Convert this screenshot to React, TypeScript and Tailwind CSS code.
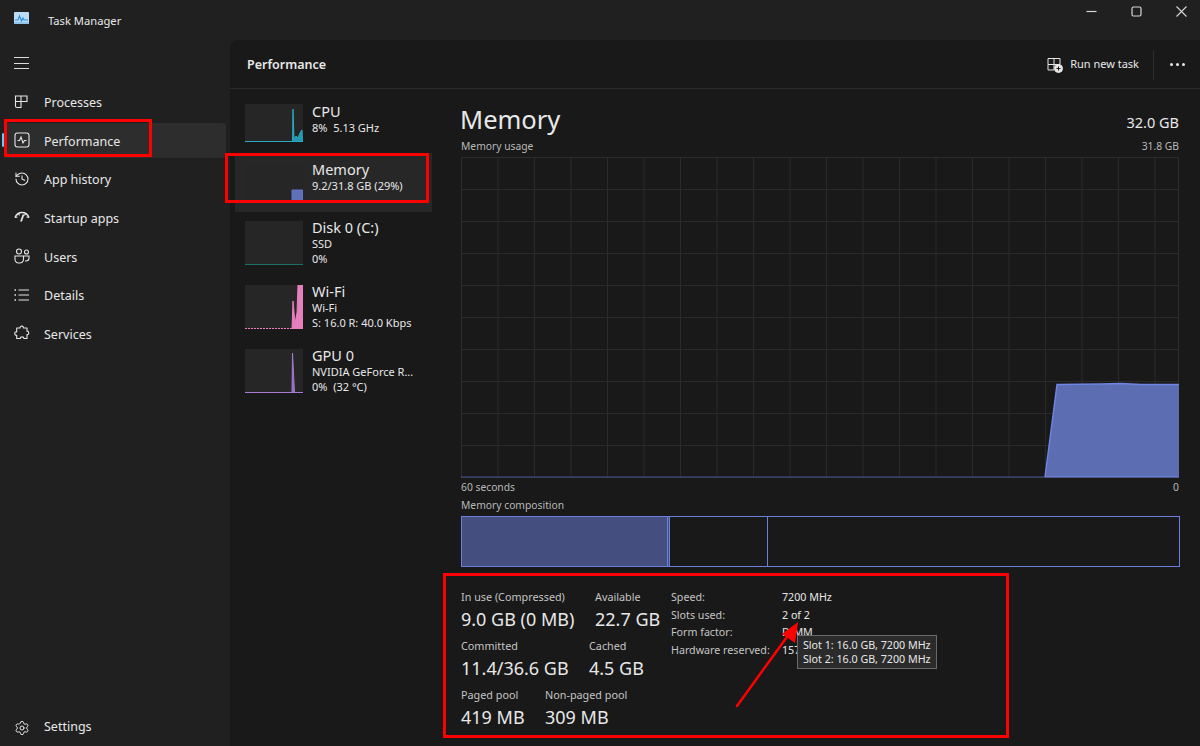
import { History, Settings } from "lucide-react";
import type { ReactNode } from "react";

const font = { fontFamily: '"Noto Sans", "Open Sans", sans-serif' };

function Icon({ children }: { children: ReactNode }) {
  return (
    <svg width="16" height="16" viewBox="0 0 16 16" fill="none" stroke="#e6e6e6" strokeWidth="1.1" className="shrink-0">
      {children}
    </svg>
  );
}

const navItems = [
  {
    label: "Processes",
    icon: (
      <Icon>
        <path d="M1.500 2h5.500v5.500h-5.500zM7 2h6v5.500h-6zM1.500 7.500h5.500v6h-4a1.500 1.500 0 0 1-1.500-1.500z" />
      </Icon>
    ),
  },
  {
    label: "Performance",
    active: true,
    icon: (
      <Icon>
        <rect x="1" y="1" width="14" height="14" rx="2.500" />
        <path d="M3.500 8.500h2l1.500-3.500 2 6 1.500-2.500h2" />
      </Icon>
    ),
  },
  { label: "App history", icon: <History size={16} color="#e6e6e6" strokeWidth={1.600} className="shrink-0" /> },
  {
    label: "Startup apps",
    icon: (
      <Icon>
        <path d="M1 8.500c1.500-3.500 4-5 7-5s5.500 1.500 7 5" strokeWidth="1.500" />
        <path d="M1 8.500l2.500-.5M15 8.500l-2.500-.5M4.500 4.500l1 2M11.500 4.500l-1 2" />
        <path d="M9.500 5.500 7 12.500" strokeWidth="1.800" />
      </Icon>
    ),
  },
  {
    label: "Users",
    icon: (
      <Icon>
        <circle cx="5" cy="3.500" r="2.500" />
        <circle cx="12.500" cy="4" r="2" />
        <path d="M1 8h8.500v3.500a4 4 0 0 1-4 3.500h-1a3.500 3.500 0 0 1-3.500-3.500zM9.500 8h5.500v2a3 3 0 0 1-3 3h-1" />
      </Icon>
    ),
  },
  {
    label: "Details",
    icon: (
      <Icon>
        <path d="M4.500 3h10.500M4.500 8h10.500M4.500 13h10.500" />
        <path d="M.500 3h1.500M.500 8h1.500M.500 13h1.500" strokeWidth="1.500" />
      </Icon>
    ),
  },
  {
    label: "Services",
    icon: (
      <Icon>
        <path d="M6 3c0-2.500 3.500-2.500 3.500 0h3.500v3.200c2.300-.6 2.300 4 0 3.400v3.900h-3.200c.6-2.200-4-2.200-3.400 0h-3.700v-3.200c-2.600.6-2.600-4.100 0-3.400v-3.900z" strokeLinejoin="round" />
      </Icon>
    ),
  },
];

function Spark({ line, fill, points, tall, base, dashed }: { line: string; fill: string; points: string; tall?: boolean; base?: boolean; dashed?: boolean }) {
  const h = tall ? 44 : 38;
  return (
    <div className={`w-[58px] shrink-0 bg-[#262626] ${tall ? "h-[44px]" : "h-[38px]"}`}>
      <svg width="58" height={h} viewBox={`0 0 58 ${h}`} className="block">
        <polygon points={points} fill={fill} stroke={line} strokeWidth="1" />
        {base && <line x1="0" x2="58" y1={h - 0.500} y2={h - 0.500} stroke={line} strokeDasharray={dashed ? "2 1" : undefined} />}
      </svg>
    </div>
  );
}

const devices = [
  {
    name: "CPU",
    rows: ["8%  5.13 GHz"],
    h: "h-[58px] pt-[9px]",
    text: "-mt-[2px]",
    spark: <Spark line="#2aa9c4" fill="#2596b0" points="47,38 47.500,38 48,5 49,35 51,32 53,34 55,29 57,26 57.500,38" base />,
  },
  {
    name: "Memory",
    rows: ["9.2/31.8 GB (29%)"],
    h: "h-[59px] pt-[10px] bg-[#272727]",
    text: "-mt-[3px]",
    spark: <Spark line="#5f76cf" fill="#5f70b8" points="47,38 47,27 57.500,27 57.500,38" />,
  },
  {
    name: "Disk 0 (C:)",
    rows: ["SSD", "0%"],
    h: "h-[64px] pt-[9px]",
    text: "-mt-[3px]",
    spark: <Spark tall line="#1b6f66" fill="#1b6f66" points="0,44 58,44" base />,
  },
  {
    name: "Wi-Fi",
    rows: ["Wi-Fi", "S: 16.0 R: 40.0 Kbps"],
    h: "h-[64px] pt-[9px]",
    text: "-mt-[3px]",
    spark: <Spark tall dashed line="#e87fbe" fill="#e57fbe" points="47,44 48,16 50,38 52,28 53,0 57.500,0 57.500,44" base />,
  },
  {
    name: "GPU 0",
    rows: ["NVIDIA GeForce R...", "0%  (32 °C)"],
    h: "h-[64px] pt-[9px]",
    text: "-mt-[3px]",
    spark: <Spark tall line="#a67bd0" fill="#8f6bbb" points="47,44 47.500,4 49.500,44" base />,
  },
];

const stats = [
  [
    { w: "w-[134px]", label: "In use (Compressed)", value: "9.0 GB (0 MB)" },
    { w: "", label: "Available", value: "22.7 GB" },
  ],
  [
    { w: "w-[128px]", label: "Committed", value: "11.4/36.6 GB" },
    { w: "", label: "Cached", value: "4.5 GB" },
  ],
  [
    { w: "w-[84px]", label: "Paged pool", value: "419 MB" },
    { w: "", label: "Non-paged pool", value: "309 MB" },
  ],
];

const specs = [
  ["Speed:", "7200 MHz"],
  ["Slots used:", "2 of 2"],
  ["Form factor:", "DIMM"],
  ["Hardware reserved:", "157 MB"],
];

const xLines = Array.from({ length: 19 }, (_, i) => 37 + i * 36.500);
const yLines = Array.from({ length: 11 }, (_, i) => 0.500 + i * 32);

export default function App() {
  return (
    <div style={font} className="relative flex h-[746px] w-[1200px] flex-col overflow-hidden bg-[#202020] text-[#e8e8e8]">
      {/* title bar */}
      <div className="flex h-10 shrink-0 items-start">
        <div className="ml-[14px] mt-[12px]">
          <svg width="15" height="12" viewBox="0 0 15 12">
            <rect width="15" height="12" rx="1" fill="#bcdcf5" />
            <path d="M1 8h3l1.500-4 2 5 1.500-3 1 2h4" fill="none" stroke="#2f8fe0" strokeWidth="1.200" />
            <rect y="10" width="15" height="2" fill="#8fc4ee" />
          </svg>
        </div>
        <span className="ml-[19px] mt-[13px] text-[11.200px] leading-4">Task Manager</span>
        <div className="ml-auto mr-[13px] mt-[6px] flex items-center gap-[34px]">
          <svg width="11" height="11" viewBox="0 0 11 11" stroke="#d8d8d8" strokeWidth="1.200">
            <path d="M0.500 5.500h10" />
          </svg>
          <svg width="11" height="11" viewBox="0 0 11 11" fill="none" stroke="#d8d8d8" strokeWidth="1.200">
            <rect x="1" y="1" width="9" height="9" rx="1.500" />
          </svg>
          <svg width="11" height="11" viewBox="0 0 11 11" stroke="#d8d8d8" strokeWidth="1.100">
            <path d="M0.500 0.500l10 10M10.500 0.500l-10 10" />
          </svg>
        </div>
      </div>

      <div className="flex min-h-0 flex-1">
        {/* side nav */}
        <nav className="flex w-[230px] shrink-0 flex-col pb-[1px] pr-[4px] text-[12.500px]">
          <div className="ml-[14px] mt-[17px] mb-[15px] flex h-3 w-[15px] flex-col justify-between">
            <div className="h-px bg-[#dcdcdc]" />
            <div className="h-px bg-[#dcdcdc]" />
            <div className="h-px bg-[#dcdcdc]" />
          </div>
          <div className="flex flex-col">
            {navItems.map((item) => (
              <div
                key={item.label}
                className={`relative ml-[4px] mb-[3.670px] flex h-[35px] items-center gap-[14px] rounded pl-[10px] ${item.active ? "bg-[#2d2d2d]" : ""}`}
              >
                {item.active && <div className="absolute -left-[2px] top-[10px] h-[14px] w-[2px] rounded bg-[#60cdff]" />}
                {item.icon}
                <span className="pt-[4px]">{item.label}</span>
              </div>
            ))}
          </div>
          <div className="ml-[4px] mt-auto flex h-[35px] items-center gap-[14px] pl-[10px]">
            <Settings size={16} color="#e6e6e6" strokeWidth={1.500} className="shrink-0" />
            <span>Settings</span>
          </div>
        </nav>

        {/* main panel */}
        <main className="flex min-w-0 flex-1 flex-col rounded-tl-lg bg-[#191919]">
          <header className="flex h-[49px] shrink-0 items-center border-b border-[#2a2a2a] pl-[17px] pr-[15px]">
            <h1 className="mt-[3px] text-[12.500px] font-semibold">Performance</h1>
            <div className="ml-auto mt-[1px] flex items-center">
              <svg width="16" height="16" viewBox="0 0 16 16" fill="none" stroke="#e6e6e6" strokeWidth="1">
                <path d="M1 1.500h12v6h-12zM7 1.500v11.500M1 7.500v5.500h6" />
                <circle cx="11.500" cy="11.500" r="4" fill="#e6e6e6" />
                <path d="M9.500 11.500h4M11.500 9.500v4" stroke="#191919" />
              </svg>
              <span className="ml-[7px] text-[11px]">Run new task</span>
              <div className="ml-[14px] h-[30px] w-px bg-[#2d2d2d]" />
              <div className="ml-[16px] flex gap-[3px]">
                <div className="h-[3px] w-[3px] rounded-full bg-[#e6e6e6]" />
                <div className="h-[3px] w-[3px] rounded-full bg-[#e6e6e6]" />
                <div className="h-[3px] w-[3px] rounded-full bg-[#e6e6e6]" />
              </div>
            </div>
          </header>

          <div className="flex min-h-0 flex-1">
            {/* device list */}
            <div className="w-[202px] shrink-0 pl-[5px] pt-[6px]">
              {devices.map((d) => (
                <div key={d.name} className={`flex gap-[9px] pl-[10px] ${d.h}`}>
                  {d.spark}
                  <div className={d.text}>
                    <div className="text-[14.500px] leading-[19px]">{d.name}</div>
                    {d.rows.map((r) => (
                      <div key={r} className="whitespace-pre text-[11px] leading-[14.500px]">
                        {r}
                      </div>
                    ))}
                  </div>
                </div>
              ))}
            </div>

            {/* detail */}
            <section className="relative min-w-0 flex-1 pl-[29px] pr-[21px]">
              <div className="-ml-[1px] flex items-start justify-between pt-[13px]">
                <h2 className="text-[25.500px] leading-[34px]">Memory</h2>
                <span className="mt-[10px] text-[14.500px] leading-5">32.0 GB</span>
              </div>
              <div className="mt-[3px] flex justify-between text-[10.300px] leading-[14px] text-[#b8b8b8]">
                <span>Memory usage</span>
                <span>31.8 GB</span>
              </div>
              <svg width="718" height="321" viewBox="0 0 718 321" className="mt-[4px] block">
                {xLines.map((x) => (
                  <line key={x} x1={x} x2={x} y1="0" y2="320" stroke="#2a2a2a" />
                ))}
                {yLines.map((y) => (
                  <line key={y} x1="0" x2="718" y1={y} y2={y} stroke="#2a2a2a" />
                ))}
                <rect x="0.500" y="0.500" width="717" height="320" fill="none" stroke="#2c2c2c" />
                <polygon
                  points="584,320 596,227.500 640,227 660,226.500 680,227.500 718,227.500 718,320"
                  fill="#5f70b8"
                  fillOpacity="0.96"
                />
                <line x1="0" x2="584" y1="320" y2="320" stroke="#46548f" strokeWidth="1.200" />
                <polyline
                  points="584,320 596,227.500 640,227 660,226.500 680,227.500 718,227.500"
                  fill="none"
                  stroke="#6f86e6"
                  strokeWidth="1.400"
                />
                <line x1="584" x2="718" y1="320" y2="320" stroke="#6f86e6" strokeWidth="1.200" />
              </svg>
              <div className="mt-[2px] flex justify-between text-[10.300px] leading-[14px] text-[#b8b8b8]">
                <span>60 seconds</span>
                <span>0</span>
              </div>
              <div className="mt-[4px] text-[10.300px] leading-[14px] text-[#b8b8b8]">Memory composition</div>
              <div className="mt-[4px] flex h-[51px] w-[719px] border border-[#6b80dc]">
                <div className="w-[205px] bg-[#454f7f]" />
                <div className="w-[3px] border-x border-[#6b80dc] bg-[#454f7f]" />
                <div className="w-[98px] border-r border-[#6b80dc]" />
              </div>

              {/* stats */}
              <div className="mt-[22px] flex">
                <div className="w-[210px] shrink-0">
                  {stats.map((row, i) => (
                    <div key={i} className="mb-[6px] flex">
                      {row.map((s) => (
                        <div key={s.label} className={s.w}>
                          <div className="text-[10.800px] leading-[16px] text-[#c4c4c4]">{s.label}</div>
                          <div className="mt-[1px] whitespace-nowrap text-[18px] leading-[26px]">{s.value}</div>
                        </div>
                      ))}
                    </div>
                  ))}
                </div>
                <div className="grid h-fit grid-cols-[111px_auto] text-[10.700px] leading-[17.500px]">
                  {specs.map(([k, v]) => (
                    <div key={k} className="contents">
                      <span className="text-[#c4c4c4]">{k}</span>
                      <span>{v}</span>
                    </div>
                  ))}
                </div>
              </div>
            </section>
          </div>
        </main>
      </div>

      {/* tooltip */}
      <div className="absolute left-[797px] top-[635px] border border-[#6a6a6a] bg-[#2b2b2b] px-[5px] py-[2px] text-[10.700px] leading-[14px] whitespace-nowrap">
        <div>Slot 1: 16.0 GB, 7200 MHz</div>
        <div>Slot 2: 16.0 GB, 7200 MHz</div>
      </div>

      {/* red annotations */}
      <div className="absolute left-[4px] top-[119px] h-[38px] w-[148px] border-[3px] border-[#fe0000]" />
      <div className="absolute left-[225px] top-[153px] h-[50px] w-[204px] border-[3px] border-[#fe0000]" />
      <div className="absolute left-[443px] top-[573px] h-[165px] w-[566px] border-[3px] border-[#fe0000]" />
      <svg width="80" height="100" viewBox="0 0 80 100" className="absolute left-[730px] top-[615px]">
        <line x1="7" y1="91" x2="62" y2="15" stroke="#fe0000" strokeWidth="2.500" strokeLinecap="round" />
        <polygon points="68,7 65,28 52,19" fill="#fe0000" />
      </svg>
    </div>
  );
}
